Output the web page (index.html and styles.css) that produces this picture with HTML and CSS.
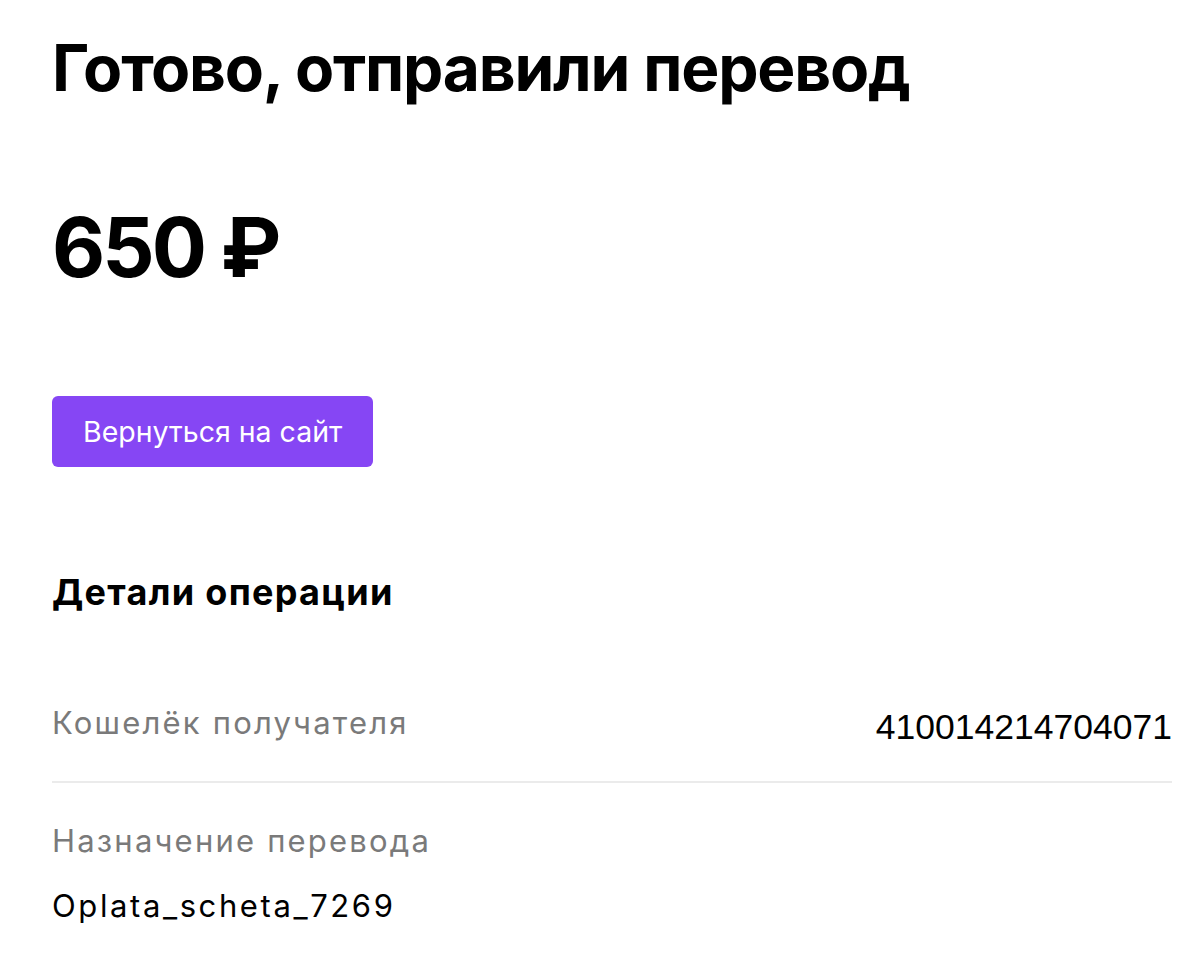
FILE: index.html
```html
<!DOCTYPE html>
<html lang="ru">
<head>
    <meta charset="UTF-8">
    <meta name="viewport" content="width=device-width, initial-scale=1.0">
    <title>Готово, отправили перевод</title>
    <link rel="stylesheet" href="styles.css">
</head>
<body>

    <div class="page">
        <h1 class="title">Готово, отправили перевод</h1>
        <div class="amount">650 ₽</div>

        <button class="back-btn" onclick="window.location.href='#'">Вернуться на сайт</button>

        <h2 class="section-title">Детали операции</h2>

        <div class="details">
            <div class="row row-inline">
                <span class="label">Кошелёк получателя</span>
                <span class="number">410014214704071</span>
            </div>
            <div class="row row-stacked">
                <span class="label">Назначение перевода</span>
                <span class="value">Oplata_scheta_7269</span>
            </div>
        </div>
    </div>

</body>
</html>
```

FILE: styles.css
```css
:root {
    --purple: #8646f4;
    --gray: #7a7a7a;
    --line: #ebebeb;
}

* {
    margin: 0;
    padding: 0;
    box-sizing: border-box;
    font-family: Inter, "Noto Sans", sans-serif;
    border: none;
    outline: none;
}

body {
    background-color: #fff;
    color: #000;
}

.page {
    padding: 30px 18px 0 52px;
    display: flex;
    flex-direction: column;
    align-items: flex-start;
}

.title {
    font-size: 64px;
    line-height: 1.2;
    font-weight: 700;
    letter-spacing: -1.2px;
}

.amount {
    margin-top: 92px;
    font-size: 82px;
    line-height: 1.2;
    font-weight: 700;
    letter-spacing: -3px;
}

.back-btn {
    margin-top: 99px;
    height: 71px;
    padding: 0 31px;
    background-color: var(--purple);
    color: #fff;
    border-radius: 6px;
    font-size: 28.5px;
    font-weight: 400;
    cursor: pointer;
}

.section-title {
    margin-top: 104px;
    font-size: 36px;
    line-height: 1.2;
    font-weight: 700;
    letter-spacing: 1.3px;
}

.details {
    width: 100%;
    margin-top: 91px;
}

.row {
    display: flex;
}

.row-inline {
    justify-content: space-between;
    align-items: flex-start;
    padding-bottom: 34px;
    border-bottom: 2px solid var(--line);
}

.row-stacked {
    flex-direction: column;
    padding-top: 40px;
    gap: 29px;
}

.label {
    font-size: 31px;
    line-height: 36px;
    color: var(--gray);
    letter-spacing: 2.2px;
}

.number {
    margin-top: 2px;
    font-family: "Liberation Sans", Arial, sans-serif;
    font-size: 35.5px;
    line-height: 40px;
}

.value {
    font-size: 31px;
    line-height: 36px;
    letter-spacing: 2.6px;
}
```
